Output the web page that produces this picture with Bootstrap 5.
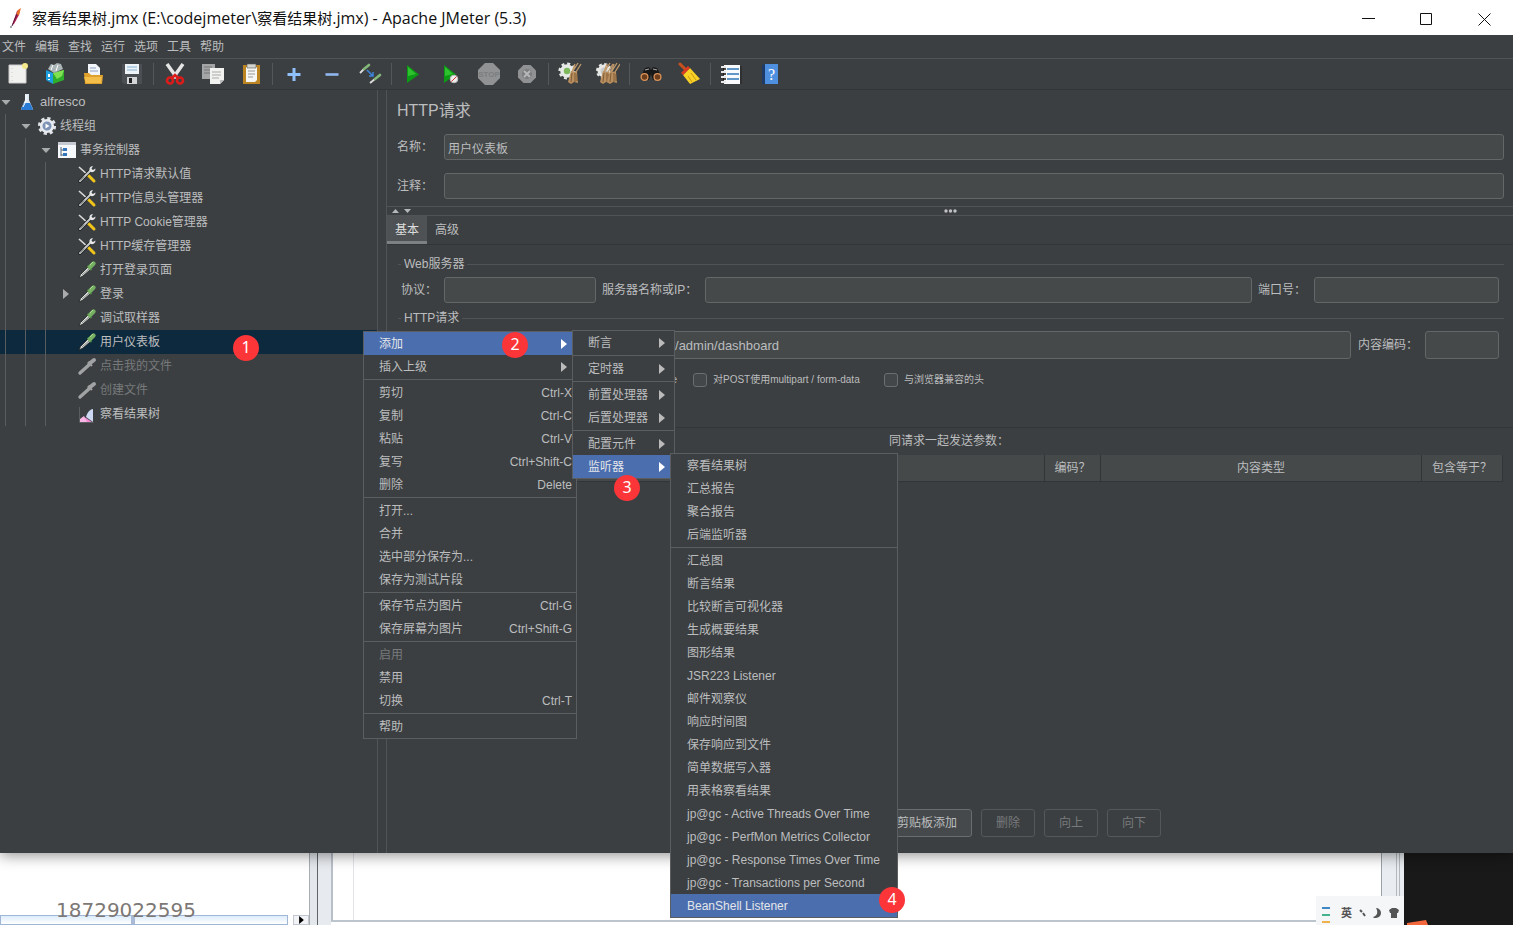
<!DOCTYPE html>
<html lang="zh-CN">
<head>
<meta charset="utf-8">
<meta name="viewport" content="width=device-width, initial-scale=1">
<title>察看结果树.jmx - Apache JMeter (5.3)</title>
<link rel="stylesheet" href="https://cdn.jsdelivr.net/npm/bootstrap@5.3.0/dist/css/bootstrap.min.css">
<style>
:root{--panel:#3c3f41;--field:#45494a;--edge:#646668;--rule:#515457;--ink:#bbbdbf;--pick:#4b6eaf}
body{font:12px/16px "Liberation Sans","Noto Sans CJK SC",sans-serif;color:var(--ink);background:#fff;min-height:100vh;overflow:hidden}
button{font:inherit;color:inherit}
.latin{font-size:13px}
/* window frame */
.app{background:var(--panel);z-index:2;box-shadow:0 2px 14px rgba(0,0,0,.45)}
.titlebar{height:35px;background:#fff;color:#111;font:16px/34px "Open Sans","Noto Sans CJK SC",sans-serif;padding-left:7px}
.titlebar .han{font-size:15px}
.winbtn{width:58px;height:34px;background:none;border:0;padding:0}
.menubar{height:24px;border-bottom:1px solid var(--rule);gap:9px;padding-left:2px}
.menubar a{color:var(--ink);text-decoration:none}
.toolbar{height:31px;gap:2px;border-bottom:1px solid #333638}
.tool{width:36px;height:28px;border:0;background:none;padding:0}
.tool svg,.ico{width:24px;height:24px;vertical-align:middle}
.tsep{width:1px;height:22px;margin:0 1px;background:#55585a}
/* tree */
.tree{width:378px;flex:none;border-right:1px solid var(--rule)}
.tree ul{list-style:none;margin:0;padding:0;position:relative}
.tree ul ul::before{content:"";position:absolute;z-index:1;top:0;bottom:0;left:5px;border-left:1px solid #5a5d5f}
.tree ul ul ul::before{left:25px}
.tree ul ul ul ul::before{left:45px}
.node{height:24px;position:relative;display:flex;align-items:center;white-space:nowrap}
.node .ico{width:20px;height:20px;margin:0 3px 0 5px;flex:none}
.lv1{padding-left:20px}.lv2{padding-left:40px}.lv3{padding-left:60px}
.tw{width:12px;flex:none;display:flex;justify-content:center}
.tw svg{width:10px;height:10px;fill:#a9abad}
.picked{background:#0d293e}
.off{color:#777a7c}
.split{width:9px;flex:none;border-right:1px solid var(--rule)}
.editor{min-width:0}
/* editor */
.heading{font-size:16px;line-height:24px;margin:0 0 11px;font-weight:400}
.field{height:26px;background:var(--field);border:1px solid var(--edge);border-radius:3px;color:var(--ink);padding:0 3px;font:inherit;min-width:0}
.tall{height:28px}
.urltext{font-size:13px}
.namelab{width:47px}
.hsplit{height:10px;border:solid var(--rule);border-width:1px 0;margin-top:7px;padding-right:24px}
.hsplit svg{height:8px}
.tabs{height:29px;border-bottom:1px solid #333638}
.tabs button{height:28px;border:0;background:none;padding:0 8px}
.tabs .on{background:#4e5254;color:#ddd;border-bottom:3px solid #7d8183;padding-top:3px}
.group{gap:3px;height:16px;padding:0 9px 0 11px}
.group::before,.group::after{content:"";height:1px;background:var(--rule);width:3px}
.group::after{flex:1}
.line{padding:0 14px}
.line>label{flex:none}
.line>.field{flex-shrink:0}
.line>.field.flex-grow-1{flex:1 1 0}
.tick{appearance:none;width:14px;height:14px;margin:0;border:1px solid #6b6e70;border-radius:3px;background:#43474a}
.opts{font-size:10px;height:18px;gap:16px}
.opts label{display:flex;align-items:center;gap:6px;white-space:nowrap}
.opts>label{min-width:175px}
.params{margin-top:38px;border-top:1px solid #333638}
.params caption{caption-side:top;padding:0;line-height:27px;color:var(--ink);text-align:center}
.grid{width:100%;table-layout:fixed}
.grid th{height:26px;font-weight:400;text-align:center;background:var(--field);border-right:1px solid #323537;border-bottom:1px solid #323537}
.acts{gap:9px;padding-left:5px}
.act{height:28px;border:1px solid #6a6d6f;border-radius:3px;background:#45494b;padding:0 14px;white-space:nowrap}
.act:disabled{background:none;border-color:#55585a;color:#777a7c}
/* popup menus */
.popup{position:absolute;z-index:10;display:block;margin:0;padding:0;min-width:0;border:1px solid #5b5e60;border-radius:0;background:var(--panel);color:var(--ink);font-size:12px}
.popup .dropdown-item{height:23px;padding:0 4px 0 15px;display:flex;align-items:center;justify-content:space-between;color:var(--ink);border:0}
.popup .dropdown-item:disabled{color:#777a7c}
.popup .dropdown-item.active{background:var(--pick);color:#e4e6ea}
.popup hr{margin:1px 0;border:0;height:1px;background:#5b5e60;opacity:1}
.popup .arr{width:6px;height:10px;fill:#bbb;margin-right:5px}
.popup .active .arr{fill:#fff}
.m1{left:363px;top:1px;width:214px}
.m2{left:calc(100% - 4px);top:-2px;width:103px}
.m3{left:calc(100% - 4px);top:-2px;width:228px}
.popup.m3 .dropdown-item{padding-left:16px}
.step{position:absolute;z-index:20;width:26px;height:26px;border-radius:50%;background:#fb3538;color:#fff;font:16px/24px "Noto Sans",sans-serif;text-align:center}
.s1{left:233px;top:5px}.s2{left:138px;top:0}.s3{left:41px;top:20px}.s4{right:-8px;top:-7px}
/* windows behind */
.behind{height:72px;background:#fff;z-index:1}
.phone{font:20px/24px "DejaVu Sans",sans-serif;color:#7d7876;padding:45px 0 0 56px}
.sheet{width:310px;flex:none;border-right:1px solid #a8adb4}
.hbar{left:0;bottom:0;width:288px;height:10px;border:1px solid #9fb6d6;background:linear-gradient(#dcebfb,#fff)}
.hbar i{display:block;width:4px;height:8px;margin-left:130px;background:#a9b9d6}
.hbtn{left:293px;bottom:0;width:16px;height:10px;border:1px solid #c3c8d0;background:#f1f3f6}
.gut1{width:8px;background:#e4e7ec;border-right:1px solid #5f636a}
.gut2{width:13px;background:#e7eaee}
.doc{border-left:2px solid #b9bfc9;border-bottom:2px solid #bcc5cd;margin-bottom:3px;padding-left:20px}
.doc i{display:block;width:1px;height:100%;background:#e2e4e8}
.gut3{width:23px;background:#e9ecf0;border-left:1px solid #9ba1a8;padding-left:14px}
.gut3 i{display:block;width:4px;height:100%;border:solid #b4b8be;border-width:0 1px}
.dark{width:109px;background:#191919;overflow:hidden}
.ime{right:109px;bottom:0;width:88px;height:29px;background:#f5f6f7;color:#555;font-size:11px;gap:7px;padding:4px 4px 0 6px}
</style>
</head>
<body class="d-flex flex-column">
<svg width="0" height="0" class="position-absolute" aria-hidden="true">
<symbol id="down" viewBox="0 0 10 10"><path d="M.5 3h9L5 8z"/></symbol>
<symbol id="right" viewBox="0 0 6 10"><path d="M0 0v10l6-5z"/></symbol>
<symbol id="tools" viewBox="0 0 20 20"><path d="M2 3l10 9" stroke="#ddd" stroke-width="1.6"/><path d="M11 11l6 6" stroke="#f0c419" stroke-width="3" stroke-linecap="round"/><path d="M3 17L14 6" stroke="#1d1f20" stroke-width="3.6" stroke-linecap="round"/><path d="M3 17L14 6" stroke="#c9cccd" stroke-width="2" stroke-linecap="round"/><path d="M3 16.500L7 12.500" stroke="#333" stroke-width=".8"/><path d="M13 7.500a3.500 3.500 0 0 1 1-5l2-.5-1.500 2.500 1.500 1.500 2.500-1.500a3.500 3.500 0 0 1-5.500 3z" fill="#e4e6e7"/></symbol>
<symbol id="drop" viewBox="0 0 20 20"><path d="M2 18l1.500-3.500L11 7l2.500 2.500L6 16z" fill="#d9dfdb" stroke="#222" stroke-width=".8"/><path d="M5 15l7-6" stroke="#777" stroke-width=".8"/><path d="M10.500 6l4 4" stroke="#4d8a42" stroke-width="1.800"/><path d="M13 7l3.500-3.500" stroke="#76b062" stroke-width="4.400" stroke-linecap="round"/><path d="M13 5l3-3" stroke="#b4e09a" stroke-width="1"/></symbol>
<symbol id="dropoff" viewBox="0 0 20 20"><path d="M3 17L13 8" stroke="#a0a2a3" stroke-width="3.400" stroke-linecap="round"/><path d="M11 6l4 4" stroke="#a0a2a3" stroke-width="2"/><path d="M12.500 7.500L17 4" stroke="#a0a2a3" stroke-width="4" stroke-linecap="round"/></symbol>
<symbol id="gear" viewBox="0 0 20 20"><circle cx="10" cy="10" r="7.600" fill="none" stroke="#dfe3e8" stroke-width="3" stroke-dasharray="3.200 2.770"/><circle cx="10" cy="10" r="5.800" fill="#7d93b5" stroke="#e8ebef" stroke-width="2.600"/><path d="M8.500 7.500l4 2.500-4 2.500z" fill="#fff"/></symbol>
<symbol id="broom" viewBox="0 0 24 24"><path d="M20 1l-5 8M23 2l-5 8M17 2l-3 8" stroke="#c29a6b" stroke-width="1.300"/><path d="M13 9l6 1 1 11-4-1-3 2-3-2z" fill="#b98f5f"/><path d="M14 11l-1 9M17 11v9M19 12v7" stroke="#6f4f2c" stroke-width=".8"/></symbol>
</svg>

<main class="app flex-grow-1 d-flex flex-column position-relative">
<header class="titlebar d-flex align-items-center">
<svg width="17" height="24" viewBox="0 0 17 24"><path d="M5 19L10 5l3-2-1 6-5 9z" fill="#b3214b"/><path d="M9 9l2-5 3-2-2 7z" fill="#e8702a"/><path d="M5 20l5-12" stroke="#5a1644" stroke-width="1"/><circle cx="4" cy="21" r=".8" fill="#333"/></svg>
<span class="ms-2 flex-grow-1"><span class="han">察看结果树</span>.jmx (E:\codejmeter\<span class="han">察看结果树</span>.jmx) - Apache JMeter (5.3)</span>
<button class="winbtn" aria-label="最小化"><svg width="13" height="13" stroke="#111"><path d="M0 5.500h13"/></svg></button>
<button class="winbtn" aria-label="最大化"><svg width="13" height="13" stroke="#111" fill="none"><path d="M.5.5h11v11H.5z"/></svg></button>
<button class="winbtn" aria-label="关闭"><svg width="13" height="13" stroke="#111"><path d="M.5.500l12 12M12.500.500l-12 12"/></svg></button>
</header>
<nav class="menubar d-flex align-items-center"><a href="#">文件</a><a href="#">编辑</a><a href="#">查找</a><a href="#">运行</a><a href="#">选项</a><a href="#">工具</a><a href="#">帮助</a></nav>
<div class="toolbar d-flex align-items-center" role="toolbar">
<button class="tool" aria-label="新建"><svg viewBox="0 0 24 24"><path d="M3 3h17v18H3z" fill="#f1f1ef" stroke="#ccc"/><path d="M6 6v13" stroke="#ccc" stroke-dasharray="1 3"/><circle cx="19" cy="4" r="3" fill="#f4e88a"/></svg></button>
<button class="tool" aria-label="模板"><svg viewBox="0 0 24 24"><path d="M2 8l7 3v11l-7-4z" fill="#1d9fe0"/><path d="M9 11l11-3v10L9 22z" fill="#2fae2b"/><path d="M9 11l11-3-2 6-5 3z" fill="#7fe052"/><path d="M4 7l3-5 3 1 3-2 4 1 2 5-9 4z" fill="#aab6b8"/><path d="M7 8l2-5M12 9l2-6" stroke="#fff"/><path d="M5 12v3M5 17v1" stroke="#fff" stroke-width="2"/></svg></button>
<button class="tool" aria-label="打开"><svg viewBox="0 0 24 24"><path d="M6 13V2h8l4 4v8z" fill="#f2f5fa"/><path d="M8 6h6M8 9h8" stroke="#8fa3c0"/><path d="M2 11h5l2 2h12l-1 9H3z" fill="#dfa02c"/><path d="M2 15h18l-1 6H4z" fill="#f2bd49"/></svg></button>
<button class="tool" aria-label="保存"><svg viewBox="0 0 24 24"><path d="M2 2h20v20H4l-2-2z" fill="#4b4e52"/><path d="M5 2h14v10H5z" fill="#eef3f7"/><path d="M7 5h10M7 8h10" stroke="#83b3d4"/><path d="M7 15h10v7H7z" fill="#d3d5d6"/><path d="M9 16h3v5H9z" fill="#222"/></svg></button>
<span class="tsep"></span>
<button class="tool" aria-label="剪切"><svg viewBox="0 0 24 24"><path d="M4 2l10 14M20 2L10 16" stroke="#e5e5e5" stroke-width="3.500"/><g fill="none" stroke="#dc1b1b" stroke-width="2.600"><circle cx="7" cy="18.500" r="3"/><circle cx="17" cy="18.500" r="3"/><path d="M9 16l3-3 3 3"/></g></svg></button>
<button class="tool" aria-label="复制"><svg viewBox="0 0 24 24"><path d="M1 2h13v15H1z" fill="#a3a5a6"/><path d="M3 5h8M3 8h8M3 11h8" stroke="#777"/><path d="M9 6h14v12l-4 4H9z" fill="#f2f2f0"/><path d="M11 10h9M11 13h9M11 16h7" stroke="#aaa"/><path d="M19 22v-4h4z" fill="#bbb"/></svg></button>
<button class="tool" aria-label="粘贴"><svg viewBox="0 0 24 24"><path d="M4 3h17v19H4z" fill="#bd8422"/><path d="M7 5h11v13l-2 2H7z" fill="#f6f6f3"/><path d="M8 2h9v4H8z" fill="#d5d5cf" stroke="#555" stroke-width=".6"/><path d="M9 9h7M9 12h7M9 15h5" stroke="#999"/></svg></button>
<span class="tsep"></span>
<button class="tool" aria-label="展开"><svg viewBox="0 0 24 24"><path d="M12 6v13M5.500 12.500h13" stroke="#8fc0f8" stroke-width="3"/></svg></button>
<button class="tool" aria-label="折叠"><svg viewBox="0 0 24 24"><path d="M5.500 12.500h13" stroke="#8fb8ee" stroke-width="2.600"/></svg></button>
<button class="tool" aria-label="切换"><svg viewBox="0 0 24 24"><path d="M2 11l4-4M12 21l5-4" stroke="#ddd" stroke-width="1.800"/><path d="M6 7l5-4M17 17l5-4" stroke="#83b879" stroke-width="2.600" stroke-linecap="round"/><path d="M9 8l6 6m0-4v4h-4" stroke="#3d85dc" stroke-width="1.500" fill="none"/></svg></button>
<span class="tsep"></span>
<button class="tool" aria-label="启动"><svg viewBox="0 0 24 24"><path d="M6 3l12 9.500L6 21z" fill="#0c9a16"/><path d="M7 5l8 7-8 2z" fill="#2fc22f"/></svg></button>
<button class="tool" aria-label="不停顿开始"><svg viewBox="0 0 24 24"><path d="M5 3l12 9.500L5 21z" fill="#0c9a16"/><path d="M6 5l8 7-8 2z" fill="#2fc22f"/><circle cx="15" cy="17" r="3.800" fill="#eee" stroke="#bbb"/><path d="M12.500 19.500l5-5" stroke="#d33"/></svg></button>
<button class="tool" aria-label="停止"><svg viewBox="0 0 24 24"><path d="M8 1h8l7 7v8l-7 7H8l-7-7V8z" fill="#909293"/><text x="12" y="15" font-size="8" font-weight="bold" text-anchor="middle" fill="#7c7e7f">STOP</text></svg></button>
<button class="tool" aria-label="关闭"><svg viewBox="0 0 24 24"><path d="M8.500 3h7L21 8.500v7L15.500 21h-7L3 15.500v-7z" fill="#8f9192"/><circle cx="12" cy="12" r="5" fill="#7b7d7e"/><path d="M9 9l6 6m0-6l-6 6" stroke="#b5b7b8" stroke-width="2"/></svg></button>
<span class="tsep"></span>
<button class="tool" aria-label="清除"><svg viewBox="0 0 24 24"><circle cx="9" cy="9" r="5" fill="#7db85b" stroke="#e6e9e6" stroke-width="3.600"/><circle cx="9" cy="9" r="7.400" fill="none" stroke="#e6e9e6" stroke-width="2.400" stroke-dasharray="3 2.800"/><use href="#broom"/></svg></button>
<button class="tool" aria-label="清除全部"><svg viewBox="0 0 24 24"><circle cx="8" cy="9" r="5" fill="#c9cbc9" stroke="#e6e9e6" stroke-width="3"/><circle cx="8" cy="9" r="7" fill="none" stroke="#e6e9e6" stroke-width="2" stroke-dasharray="3 2.500"/><use href="#broom" x="-6"/><use href="#broom" x="1"/></svg></button>
<span class="tsep"></span>
<button class="tool" aria-label="查找"><svg viewBox="0 0 24 24"><path d="M2 14l4-8 4-1 2 3 2-3 4 1 4 8-3 4h-5l-2-6-2 6H5z" fill="#191919"/><circle cx="5.500" cy="15" r="3.400" fill="#6b3d1c" stroke="#d9935a" stroke-width="1.300"/><circle cx="18.500" cy="15" r="3.400" fill="#6b3d1c" stroke="#d9935a" stroke-width="1.300"/><path d="M6 8l4-1m4 0l4 1" stroke="#aaa"/></svg></button>
<button class="tool" aria-label="重置查找"><svg viewBox="0 0 24 24"><path d="M3 2l6 6" stroke="#c8501c" stroke-width="3" stroke-linecap="round"/><path d="M6 13l7-7 10 11-10 5z" fill="#f8d026"/><path d="M11 14l4 6m-1-9l5 7" stroke="#c99a10"/><path d="M5 12l7-7" stroke="#da3b22" stroke-width="3"/></svg></button>
<span class="tsep"></span>
<button class="tool" aria-label="函数助手"><svg viewBox="0 0 24 24"><path d="M4 3h16v19H4z" fill="#f8fafc"/><path d="M7 7h12M7 12h12M7 17h12" stroke="#2e77b6" stroke-width="1.500"/><path d="M1 5h5M1 10h5M1 15h5M1 20h5" stroke="#e8e8e8" stroke-width="2"/><path d="M3 7h3M3 12h3M3 17h3" stroke="#111" stroke-width="1.500"/><path d="M21 4v18" stroke="#222"/></svg></button>
<button class="tool" aria-label="帮助"><svg viewBox="0 0 24 24"><path d="M4 3l4-1v20H4z" fill="#1d3b66"/><path d="M7 2h13v20H7z" fill="#4f8fe0"/><text x="13.500" y="18" font-size="16" font-family="Liberation Serif" text-anchor="middle" fill="#fff">?</text></svg></button>
</div>

<div class="d-flex flex-grow-1">
<aside class="tree">
<ul>
<li><div class="node"><span class="tw"><svg><use href="#down"/></svg></span><svg class="ico" viewBox="0 0 20 20"><path d="M8 2h4v6l4 9-1 1H5l-1-1 4-9z" fill="#dfe9f2"/><path d="M7 11h6l3 6-1 1H5l-1-1z" fill="#2a7bd3"/><path d="M9 3v6l-3 6" stroke="#fff" fill="none"/></svg><span class="latin">alfresco</span></div>
<ul>
<li><div class="node lv1"><span class="tw"><svg><use href="#down"/></svg></span><svg class="ico"><use href="#gear"/></svg>线程组</div>
<ul>
<li><div class="node lv2"><span class="tw"><svg><use href="#down"/></svg></span><svg class="ico" viewBox="0 0 20 20"><path d="M1 2h18v16H1z" fill="#f5f8fc"/><path d="M1 2h18v3H1z" fill="#c5cad2"/><path d="M4 7v9M4 10h3M4 15h3" stroke="#567" fill="none"/><path d="M6 8h4v3H6zM6 13h4v3H6z" fill="#3474b8"/></svg>事务控制器</div>
<ul>
<li><div class="node lv3"><span class="tw"></span><svg class="ico"><use href="#tools"/></svg>HTTP请求默认值</div></li>
<li><div class="node lv3"><span class="tw"></span><svg class="ico"><use href="#tools"/></svg>HTTP信息头管理器</div></li>
<li><div class="node lv3"><span class="tw"></span><svg class="ico"><use href="#tools"/></svg>HTTP Cookie管理器</div></li>
<li><div class="node lv3"><span class="tw"></span><svg class="ico"><use href="#tools"/></svg>HTTP缓存管理器</div></li>
<li><div class="node lv3"><span class="tw"></span><svg class="ico"><use href="#drop"/></svg>打开登录页面</div></li>
<li><div class="node lv3"><span class="tw"><svg><use href="#right"/></svg></span><svg class="ico"><use href="#drop"/></svg>登录</div></li>
<li><div class="node lv3"><span class="tw"></span><svg class="ico"><use href="#drop"/></svg>调试取样器</div></li>
<li><div class="node lv3 picked"><span class="tw"></span><svg class="ico"><use href="#drop"/></svg>用户仪表板<span class="step s1">1</span>
<div class="dropdown-menu popup m1">
<div class="position-relative"><button class="dropdown-item active">添加<svg class="arr"><use href="#right"/></svg></button><span class="step s2">2</span>
<div class="dropdown-menu popup m2">
<button class="dropdown-item">断言<svg class="arr"><use href="#right"/></svg></button><hr>
<button class="dropdown-item">定时器<svg class="arr"><use href="#right"/></svg></button><hr>
<button class="dropdown-item">前置处理器<svg class="arr"><use href="#right"/></svg></button>
<button class="dropdown-item">后置处理器<svg class="arr"><use href="#right"/></svg></button><hr>
<button class="dropdown-item">配置元件<svg class="arr"><use href="#right"/></svg></button>
<div class="position-relative"><button class="dropdown-item active">监听器<svg class="arr"><use href="#right"/></svg></button><span class="step s3">3</span>
<div class="dropdown-menu popup m3">
<button class="dropdown-item">察看结果树</button>
<button class="dropdown-item">汇总报告</button>
<button class="dropdown-item">聚合报告</button>
<button class="dropdown-item">后端监听器</button><hr>
<button class="dropdown-item">汇总图</button>
<button class="dropdown-item">断言结果</button>
<button class="dropdown-item">比较断言可视化器</button>
<button class="dropdown-item">生成概要结果</button>
<button class="dropdown-item">图形结果</button>
<button class="dropdown-item">JSR223 Listener</button>
<button class="dropdown-item">邮件观察仪</button>
<button class="dropdown-item">响应时间图</button>
<button class="dropdown-item">保存响应到文件</button>
<button class="dropdown-item">简单数据写入器</button>
<button class="dropdown-item">用表格察看结果</button>
<button class="dropdown-item">jp@gc - Active Threads Over Time</button>
<button class="dropdown-item">jp@gc - PerfMon Metrics Collector</button>
<button class="dropdown-item">jp@gc - Response Times Over Time</button>
<button class="dropdown-item">jp@gc - Transactions per Second</button>
<div class="position-relative"><button class="dropdown-item active">BeanShell Listener</button><span class="step s4">4</span></div>
</div></div>
</div></div>
<button class="dropdown-item">插入上级<svg class="arr"><use href="#right"/></svg></button><hr>
<button class="dropdown-item">剪切<span>Ctrl-X</span></button>
<button class="dropdown-item">复制<span>Ctrl-C</span></button>
<button class="dropdown-item">粘贴<span>Ctrl-V</span></button>
<button class="dropdown-item">复写<span>Ctrl+Shift-C</span></button>
<button class="dropdown-item">删除<span>Delete</span></button><hr>
<button class="dropdown-item">打开...</button>
<button class="dropdown-item">合并</button>
<button class="dropdown-item">选中部分保存为...</button>
<button class="dropdown-item">保存为测试片段</button><hr>
<button class="dropdown-item">保存节点为图片<span>Ctrl-G</span></button>
<button class="dropdown-item">保存屏幕为图片<span>Ctrl+Shift-G</span></button><hr>
<button class="dropdown-item" disabled>启用</button>
<button class="dropdown-item">禁用</button>
<button class="dropdown-item">切换<span>Ctrl-T</span></button><hr>
<button class="dropdown-item">帮助</button>
</div></div></li>
<li><div class="node lv3 off"><span class="tw"></span><svg class="ico"><use href="#dropoff"/></svg>点击我的文件</div></li>
<li><div class="node lv3 off"><span class="tw"></span><svg class="ico"><use href="#dropoff"/></svg>创建文件</div></li>
<li><div class="node lv3"><span class="tw"></span><svg class="ico" viewBox="0 0 20 20"><path d="M2.500 3v15.500h14" stroke="#5a5c5e" fill="none"/><path d="M3 18l3-5 3 1 6 4z" fill="#f08ad2"/><path d="M3 18v-3l4-3 3 6z" fill="#f7b6e4"/><path d="M16 5v13l-7-5c1-4 4-8 7-8z" fill="#cdd8f2"/></svg>察看结果树</div></li>
</ul></li></ul></li></ul></li></ul>
</aside>
<div class="split"></div>

<section class="editor flex-grow-1 d-flex flex-column pb-3">
<div style="padding:9px 9px 0 10px">
<h1 class="heading">HTTP请求</h1>
<div class="d-flex align-items-center"><label class="namelab" for="nm">名称：</label><input id="nm" class="field flex-grow-1" value="用户仪表板"></div>
<div class="d-flex align-items-center" style="margin-top:13px"><label class="namelab" for="cm">注释：</label><input id="cm" class="field flex-grow-1"></div>
</div>
<div class="hsplit d-flex align-items-center"><svg class="ms-1" width="22" viewBox="0 0 22 8" fill="#b5b7b9"><path d="M1 6h7L4.500 2zM13 2h7l-3.500 4z"/></svg><svg class="mx-auto" width="14" viewBox="0 0 14 8" fill="#c0c2c3"><circle cx="2" cy="4" r="1.700"/><circle cx="6.500" cy="4" r="1.700"/><circle cx="11" cy="4" r="1.700"/></svg></div>
<div class="tabs d-flex"><button class="on">基本</button><button>高级</button></div>

<div class="group d-flex align-items-center" style="margin-top:11px">Web服务器</div>
<div class="line d-flex align-items-center" style="margin-top:5px">
<label for="pr" style="width:43px">协议：</label><input id="pr" class="field" style="width:152px">
<label for="sv" style="width:109px;padding-left:6px">服务器名称或IP：</label><input id="sv" class="field flex-grow-1">
<label for="po" style="width:62px;padding-left:6px">端口号：</label><input id="po" class="field" style="width:185px">
</div>
<div class="group d-flex align-items-center" style="margin-top:7px">HTTP请求</div>
<div class="line d-flex align-items-center" style="margin-top:5px">
<select class="field tall" style="width:143px" aria-label="方法"><option>GET</option></select>
<label for="pa" style="width:49px;padding-left:6px">路径：</label><input id="pa" class="field tall urltext flex-grow-1" value="/alfresco/user/admin/dashboard">
<label for="en" style="width:74px;padding-left:7px">内容编码：</label><input id="en" class="field tall" style="width:74px">
</div>
<div class="opts line d-flex align-items-center" style="margin-top:12px">
<div class="d-flex justify-content-end flex-shrink-0" style="width:276px"><label><input type="checkbox" class="tick">使用 KeepAlive</label></div>
<label><input type="checkbox" class="tick">对POST使用multipart / form-data</label>
<label><input type="checkbox" class="tick">与浏览器兼容的头</label>
</div>
<div class="params flex-grow-1" style="padding:0 10px 0 8px">
<table class="grid">
<caption>同请求一起发送参数：</caption>
<colgroup><col><col><col style="width:56px"><col style="width:321px"><col style="width:81px"></colgroup>
<thead><tr><th></th><th></th><th>编码？</th><th>内容类型</th><th>包含等于？</th></tr></thead>
</table>
</div>
<div class="acts d-flex justify-content-center">
<button class="act">详细</button><button class="act">添加</button><button class="act">从剪贴板添加</button><button class="act" disabled>删除</button><button class="act" disabled>向上</button><button class="act" disabled>向下</button>
</div>
</section>
</div>
</main>

<footer class="behind d-flex position-relative">
<div class="sheet position-relative"><div class="hbar position-absolute"><i></i></div><div class="hbtn position-absolute d-flex justify-content-center align-items-center"><svg width="5" height="8" viewBox="0 0 6 10"><path d="M0 0v10l6-5z"/></svg></div><div class="phone position-relative">18729022595</div></div>
<div class="gut1"></div><div class="gut2"></div>
<div class="doc flex-grow-1"><i></i></div>
<div class="gut3"><i></i></div>
<div class="dark d-flex align-items-end"><svg width="26" height="5"><path d="M3 3l19-3 2 5H3z" fill="#f2683c"/></svg></div>
<div class="ime position-absolute d-flex align-items-center">
<svg width="8" height="20"><path d="M0 5h8" stroke="#3f86c6" stroke-width="2"/><path d="M0 12h8" stroke="#45b48c" stroke-width="2"/><path d="M0 19h8" stroke="#efb04e" stroke-width="2"/></svg>
<b class="ms-1">英</b>
<svg width="7" height="9"><path d="M1 2l2 2M4 5l2 3" stroke="#555" stroke-width="2"/></svg>
<svg width="9" height="10"><path d="M3 0a5 5 0 0 1 0 10 3 3 0 0 1-3-1c5-1 5-6 3-9z" fill="#555"/></svg>
<svg width="10" height="10"><path d="M0 2l3-2h4l3 2-1 3H8v5H2V5H1z" fill="#555"/></svg>
</div>
</footer>
<script src="https://cdn.jsdelivr.net/npm/bootstrap@5.3.0/dist/js/bootstrap.bundle.min.js"></script>
</body>
</html>
